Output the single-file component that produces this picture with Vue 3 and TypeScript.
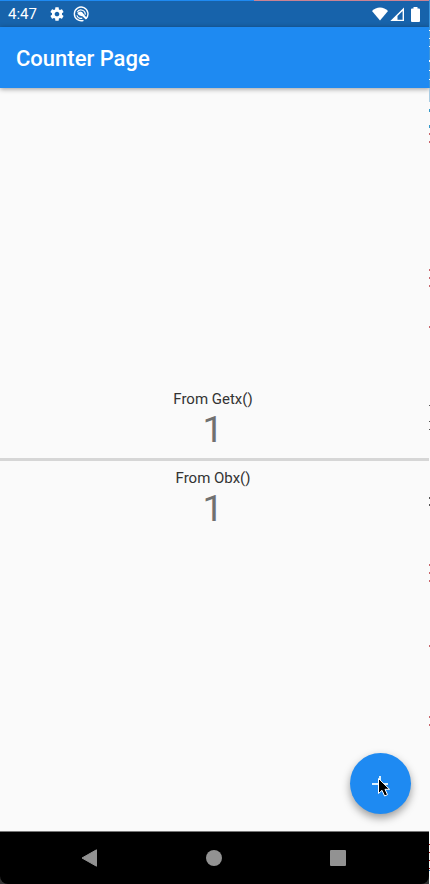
<script setup lang="ts">
import { ref } from 'vue'

interface EdgeMark {
  top: number
  height: number
  color: string
}

const count = ref<number>(1)

function increment(): void {
  count.value += 1
}

const red = '#c9666c'
const dark = '#555555'
const edgeMarks: EdgeMark[] = [
  { top: 30, height: 1, color: '#ffffff' },
  { top: 38, height: 1, color: '#ffffff' },
  { top: 46, height: 1, color: '#ffffff' },
  { top: 60, height: 2, color: '#ffffff' },
  { top: 70, height: 1, color: '#ffffff' },
  { top: 79, height: 1, color: '#ffffff' },
  { top: 88, height: 14, color: '#a9cce3' },
  { top: 109, height: 3, color: '#3498c8' },
  { top: 125, height: 3, color: '#3498c8' },
  { top: 133, height: 2, color: red },
  { top: 141, height: 2, color: red },
  { top: 269, height: 2, color: red },
  { top: 277, height: 2, color: red },
  { top: 285, height: 2, color: red },
  { top: 326, height: 2, color: red },
  { top: 405, height: 1, color: dark },
  { top: 421, height: 1, color: dark },
  { top: 429, height: 1, color: dark },
  { top: 497, height: 2, color: dark },
  { top: 504, height: 2, color: dark },
  { top: 564, height: 2, color: red },
  { top: 572, height: 2, color: red },
  { top: 580, height: 2, color: red },
  { top: 645, height: 2, color: red },
  { top: 716, height: 2, color: red },
  { top: 724, height: 2, color: red },
  { top: 844, height: 1, color: '#b91c1c' },
  { top: 852, height: 1, color: '#b91c1c' },
  { top: 860, height: 1, color: '#b91c1c' },
  { top: 868, height: 1, color: '#b91c1c' },
  { top: 870, height: 1, color: '#3b78b8' },
]
</script>

<template>
  <div class="screen">
    <div class="status">
      <span class="time">4:47</span>
      <svg class="gear" viewBox="0 0 24 24" aria-hidden="true">
        <path
          fill="#fff"
          fill-rule="evenodd"
          d="M19.43 12.98c.04-.32.07-.64.07-.98s-.03-.66-.07-.98l2.11-1.65c.19-.15.24-.42.12-.64l-2-3.46c-.12-.22-.39-.3-.61-.22l-2.49 1c-.52-.4-1.08-.73-1.69-.98l-.38-2.65C14.46 2.18 14.25 2 14 2h-4c-.25 0-.46.18-.49.42l-.38 2.65c-.61.25-1.17.59-1.69.98l-2.49-1c-.23-.09-.49 0-.61.22l-2 3.46c-.13.22-.07.49.12.64l2.11 1.65c-.04.32-.07.65-.07.98s.03.66.07.98l-2.11 1.65c-.19.15-.24.42-.12.64l2 3.46c.12.22.39.3.61.22l2.49-1c.52.4 1.08.73 1.69.98l.38 2.65c.03.24.24.42.49.42h4c.25 0 .46-.18.49-.42l.38-2.65c.61-.25 1.17-.59 1.69-.98l2.49 1c.23.09.49 0 .61-.22l2-3.46c.12-.22.07-.49-.12-.64l-2.11-1.65zM12 15.5c-1.93 0-3.5-1.57-3.5-3.5s1.57-3.5 3.5-3.5 3.5 1.57 3.5 3.5-1.57 3.5-3.5 3.5z"
        />
      </svg>
      <svg class="ring" viewBox="0 0 16 16" aria-hidden="true">
        <path d="M13 12.7A6.8 6.8 0 1 0 10.5 14.3" fill="none" stroke="#fff" stroke-width="1.4" />
        <path d="M4.2 6.2A4.3 4.3 0 0 1 12.2 8.8" fill="none" stroke="#fff" stroke-width="1.2" />
        <path d="M3.9 9.4A4.4 4.4 0 0 0 9.3 12.2" fill="none" stroke="#fff" stroke-width="1.2" />
        <path d="M4.4 7.8Q5.6 4.6 9 6L14 12.2L12.8 13.6L9.4 10.2Q6.6 10.4 4.4 7.8Z" fill="#fff" />
      </svg>
      <span class="spacer"></span>
      <svg class="wifi" viewBox="0 0 16 14" aria-hidden="true">
        <path d="M8 13.6L0 4Q3.3.5 8 .5T16 4Z" fill="#fff" />
      </svg>
      <svg class="signal" viewBox="0 0 14 14" aria-hidden="true">
        <path fill="#fff" fill-rule="evenodd" d="M14 .5V14H.3ZM12.6 4L7.5 9V12.7H12.6Z" />
      </svg>
      <svg class="battery" viewBox="0 0 9 15" aria-hidden="true">
        <path d="M2.5 0H6.5V1.5H8Q9 1.5 9 2.5V14Q9 15 8 15H1Q0 15 0 14V2.5Q0 1.5 1 1.5H2.5Z" fill="#fff" />
      </svg>
    </div>

    <header class="appbar">
      <h1>Counter Page</h1>
    </header>

    <main class="body">
      <section class="half upper">
        <p class="label">From Getx()</p>
        <p class="count">{{ count }}</p>
      </section>
      <hr class="divider" />
      <section class="half">
        <p class="label">From Obx()</p>
        <p class="count">{{ count }}</p>
      </section>
      <button class="fab" type="button" aria-label="Increment" @click="increment">
        <svg viewBox="0 0 61 61" aria-hidden="true">
          <path d="M30 23V38M22 31H38" stroke="#d9f0ff" stroke-width="2" />
          <path
            d="M28.5 25.5V40.5L32 37.3L34.6 43L37.5 41.7L35 36.3H39.5Z"
            fill="#000"
            stroke="#fff"
            stroke-width="1"
          />
        </svg>
      </button>
    </main>

    <nav class="navbar">
      <button type="button" aria-label="Back">
        <svg viewBox="0 0 18 18"><path d="M1 9L15.5 .8V17.2Z" fill="#929292" stroke="#929292" stroke-linejoin="round" /></svg>
      </button>
      <button type="button" aria-label="Home">
        <svg viewBox="0 0 18 18"><circle cx="9" cy="9" r="8" fill="#929292" /></svg>
      </button>
      <button type="button" aria-label="Recent apps">
        <svg viewBox="0 0 18 18"><rect x="1" y="1" width="16" height="16" rx="1" fill="#929292" /></svg>
      </button>
    </nav>

    <div class="edge" aria-hidden="true">
      <i
        v-for="mark in edgeMarks"
        :key="mark.top"
        :style="{ top: mark.top + 'px', height: mark.height + 'px', background: mark.color }"
      ></i>
    </div>
  </div>
</template>

<style>
body {
  margin: 0;
  background: #fafafa;
}
</style>

<style scoped>
.screen {
  position: relative;
  display: flex;
  flex-direction: column;
  min-height: 100vh;
  overflow: hidden;
  font-family: Roboto, "Liberation Sans", sans-serif;
  background: linear-gradient(#333, #333) bottom / 100% 20px no-repeat #fafafa;
}

.status {
  display: flex;
  align-items: center;
  box-sizing: border-box;
  height: 27px;
  padding: 0 10px 0 8px;
  color: #fff;
  background: #1763ab;
  border-top: 1px solid;
  border-image: linear-gradient(to right, #1e8af2 59%, #c98393 59%) 1;
}

.time {
  width: 41px;
  font-size: 15px;
  line-height: 18px;
}

.gear {
  width: 16px;
  height: 16px;
  margin-right: 8px;
}

.ring {
  width: 16px;
  height: 16px;
}

.spacer {
  flex: 1;
}

.wifi {
  width: 16px;
  height: 14px;
  margin-right: 2px;
}

.signal {
  width: 14px;
  height: 14px;
  margin-right: 7px;
}

.battery {
  width: 9px;
  height: 15px;
}

.appbar {
  position: relative;
  z-index: 1;
  display: flex;
  align-items: center;
  box-sizing: border-box;
  height: 61px;
  padding: 2px 16px 0;
  color: #fff;
  background: #1e8af2;
  box-shadow: 0 1px 5px rgba(0, 0, 0, 0.4);
}

h1 {
  margin: 0;
  font-size: 22px;
  font-weight: 500;
  line-height: 26px;
}

.body {
  position: relative;
  display: flex;
  flex: 1;
  flex-direction: column;
  background: #fafafa;
}

.half {
  display: flex;
  flex: 1;
  flex-direction: column;
  align-items: center;
  padding: 8px 4px 6px 0;
}

.upper {
  justify-content: flex-end;
}

.label,
.count {
  margin: 0;
}

.label {
  font-size: 15px;
  line-height: 18px;
  color: #333;
}

.count {
  font-size: 37px;
  line-height: 44px;
  color: #707070;
}

.divider {
  width: 100%;
  height: 3px;
  margin: 0;
  background: #d6d6d6;
  border: 0;
}

.fab {
  position: absolute;
  right: 19px;
  bottom: 17px;
  width: 61px;
  height: 61px;
  padding: 0;
  background: #1e8af2;
  border: 0;
  border-radius: 50%;
  box-shadow: 0 4px 8px rgba(0, 0, 0, 0.38);
}

.fab svg {
  display: block;
  width: 100%;
  height: 100%;
}

.navbar {
  display: flex;
  align-items: center;
  justify-content: center;
  gap: 88px;
  box-sizing: border-box;
  height: 53px;
  padding-right: 2px;
  margin-right: 1px;
  background: #000;
  border-top: 1px solid #777;
  border-radius: 0 0 8px 8px;
}

.navbar button {
  display: grid;
  place-items: center;
  width: 36px;
  height: 36px;
  padding: 0;
  background: none;
  border: 0;
}

.navbar svg {
  width: 18px;
  height: 18px;
}

.edge {
  position: absolute;
  z-index: 2;
  top: 0;
  right: 0;
  bottom: 0;
  width: 1px;
  background: linear-gradient(#3b95dc 88px, #fafafa 88px);
}

.edge i {
  position: absolute;
  right: 0;
  width: 1px;
}
</style>
